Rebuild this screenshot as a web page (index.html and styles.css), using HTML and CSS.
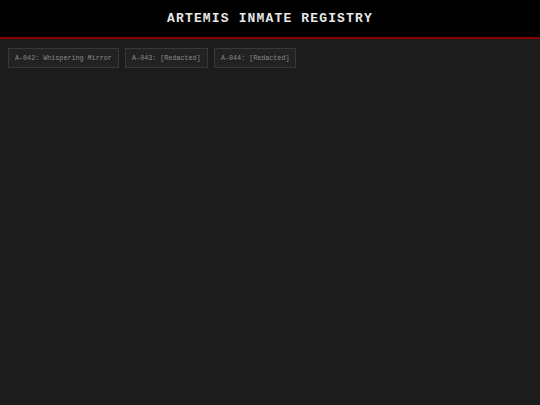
FILE: index.html
```html
<!DOCTYPE html>
<html>
<head>
<meta charset="utf-8">
<link rel="stylesheet" href="styles.css">
</head>
<body>
<header class="topbar"><h1 class="title">ARTEMIS INMATE REGISTRY</h1></header>
<nav class="tabs">
  <div class="tab">A-042: Whispering Mirror</div>
  <div class="tab">A-043: [Redacted]</div>
  <div class="tab">A-044: [Redacted]</div>
</nav>
</body>
</html>
```
FILE: styles.css
```css
html, body { margin: 0; padding: 0; }
body { background: #1c1c1c; font-family: "Courier New", "Nimbus Mono PS", "FreeMono", "Liberation Mono", monospace; width: 540px; height: 405px; overflow: hidden; }
.topbar { background: #000; height: 37px; border-bottom: 2px solid #8b0000; display: flex; align-items: center; justify-content: center; }
.title { margin: 0; color: #e8e8e8; font-size: 13px; font-weight: bold; letter-spacing: 1.15px; }
.tabs { display: flex; gap: 6.3px; padding: 9px 8px; }
.tab { background: #222; border: 1px solid #383838; color: #8a8a8a; font-size: 6.72px; line-height: 18px; padding: 0 6px; }
```
